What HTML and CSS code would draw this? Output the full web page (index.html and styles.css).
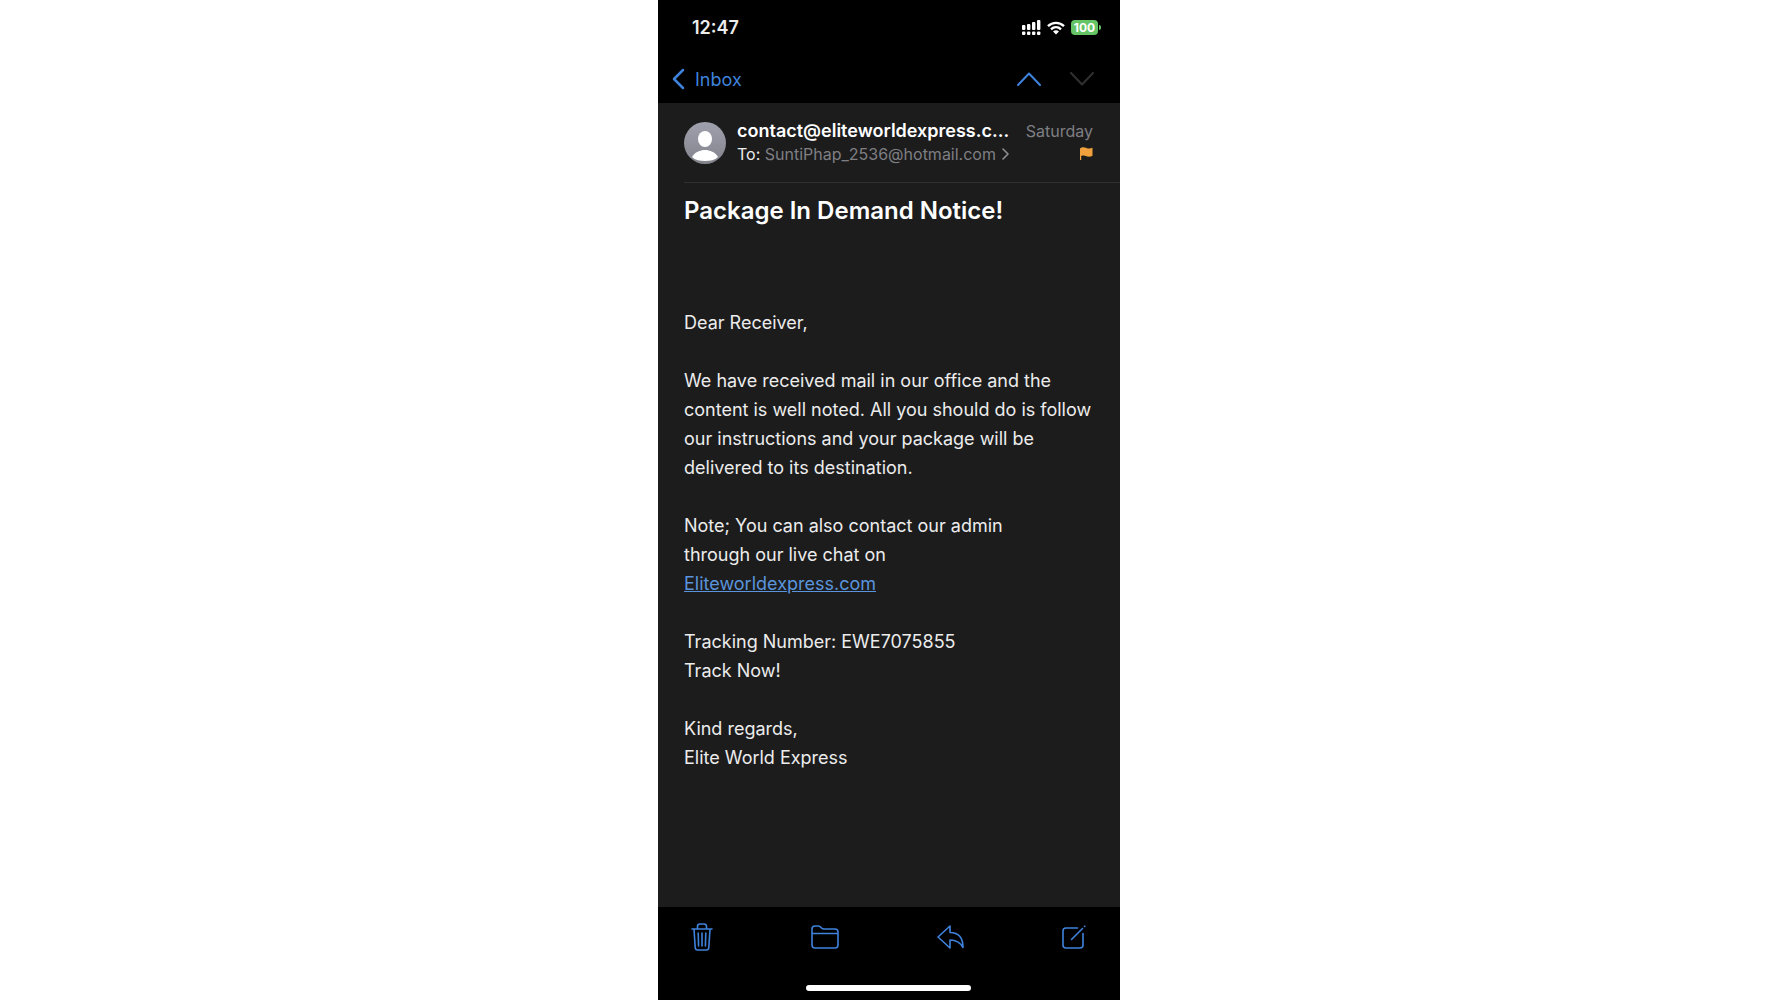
FILE: index.html
```html
<!DOCTYPE html>
<html lang="en">
<head>
  <meta charset="UTF-8" />
  <meta name="viewport" content="width=device-width, initial-scale=1.0" />
  <title>Package In Demand Notice!</title>
  <link rel="stylesheet" href="styles.css">
</head>
<body>

  <div class="phone">
    <!-- Status bar -->
    <div class="status-bar">
      <span class="time">12:47</span>
      <div class="status-icons">
        <svg width="19" height="15" viewBox="0 0 19 15" fill="#fff">
          <rect x="0" y="5" width="3.400" height="5" rx="1"/>
          <rect x="5" y="4" width="3.400" height="6" rx="1"/>
          <rect x="10" y="2" width="3.400" height="8" rx="1"/>
          <rect x="15" y="0" width="3.400" height="10" rx="1"/>
          <rect x="0" y="11.500" width="3.400" height="3.400" rx="1"/>
          <rect x="5" y="11.500" width="3.400" height="3.400" rx="1"/>
          <rect x="10" y="11.500" width="3.400" height="3.400" rx="1"/>
          <rect x="15" y="11.500" width="3.400" height="3.400" rx="1"/>
        </svg>
        <svg width="18" height="14" viewBox="0 0 18 14" fill="none" stroke="#fff" stroke-width="2.4">
          <path d="M1 5.2C5.5.7 12.500.7 17 5.200"/>
          <path d="M4 8.300c2.900-2.800 7.100-2.800 10 0"/>
          <path d="M9 13.500 6 10.500c1.800-1.600 4.200-1.600 6 0z" fill="#fff" stroke="none"/>
        </svg>
        <span class="battery">100</span>
      </div>
    </div>

    <!-- Navigation -->
    <nav class="nav-bar">
      <a href="#" class="back">
        <svg width="13" height="22" viewBox="0 0 13 22" fill="none" stroke="currentColor" stroke-width="2.500" stroke-linecap="round" stroke-linejoin="round"><path d="M11 2 2 11l9 9"/></svg>
        Inbox
      </a>
      <div class="nav-arrows">
        <button type="button" aria-label="Previous message">
          <svg width="24" height="14" viewBox="0 0 24 14" fill="none" stroke="currentColor" stroke-width="2" stroke-linecap="round" stroke-linejoin="round"><path d="M1 13 12 1.500 23 13"/></svg>
        </button>
        <button type="button" aria-label="Next message" disabled>
          <svg width="24" height="14" viewBox="0 0 24 14" fill="none" stroke="currentColor" stroke-width="2" stroke-linecap="round" stroke-linejoin="round"><path d="M1 1 12 12.500 23 1"/></svg>
        </button>
      </div>
    </nav>

    <!-- Message -->
    <main class="message">
      <header class="sender">
        <svg class="avatar" viewBox="0 0 42 42">
          <defs>
            <linearGradient id="avatarFill" x1="0" y1="0" x2="0" y2="1">
              <stop offset="0" stop-color="#a0a1ae"/>
              <stop offset="1" stop-color="#82838b"/>
            </linearGradient>
          </defs>
          <circle cx="21" cy="21" r="21" fill="url(#avatarFill)"/>
          <ellipse cx="21" cy="17" rx="7" ry="8" fill="#fff"/>
          <path d="M8 35c3-5 8-7 13-7s10 2 13 7c-3 3-8 4-13 4s-10-1-13-4z" fill="#fff"/>
        </svg>
        <div class="sender-info">
          <div class="row">
            <span class="from">contact@eliteworldexpress.c...</span>
            <span class="date">Saturday</span>
          </div>
          <div class="row">
            <span class="to"><b>To:</b> SuntiPhap_2536@hotmail.com
              <svg width="7" height="12" viewBox="0 0 7 12" fill="none" stroke="#8e8e93" stroke-width="1.600" stroke-linecap="round" stroke-linejoin="round"><path d="M1 1l5 5-5 5"/></svg>
            </span>
            <svg class="flag" width="13" height="13" viewBox="0 0 13 13" fill="#f0a03c"><path d="M0 1.500C2-.3 4.500.2 6.500 1c2 .8 4 .6 6-.2v8c-2 1-4 1.100-6 .4-2-.7-3.500-.8-5.300-.2V13H0z"/></svg>
          </div>
        </div>
      </header>

      <h1>Package In Demand Notice!</h1>

      <div class="content">
        <p>Dear Receiver,</p>
        <p>We have received mail in our office and the content is well noted. All you should do is follow our instructions and your package will be delivered to its destination.</p>
        <p>Note; You can also contact our admin<br>through our live chat on<br><a href="#">Eliteworldexpress.com</a></p>
        <p>Tracking Number: EWE7075855<br>Track Now!</p>
        <p>Kind regards,<br>Elite World Express</p>
      </div>
    </main>

    <!-- Bottom toolbar -->
    <footer class="toolbar">
      <div class="actions">
        <button type="button" aria-label="Delete">
          <svg width="22" height="28" viewBox="0 0 22 28"><path d="M1 6h20M6.500 6V3.500Q6.500 1 9 1h4q2.500 0 2.500 2.500V6M3 6l1.200 18.500Q4.400 27 6.500 27h9q2.100 0 2.300-2.500L19 6M7.200 10l.4 13M11 10v13M14.800 10l-.4 13"/></svg>
        </button>
        <button type="button" aria-label="Move to folder">
          <svg width="28" height="24" viewBox="0 0 28 24"><path d="M1 20V4q0-3 3-3h3q1.500 0 2.500 1l1 1q1 1 2.500 1h11q3 0 3 3v13q0 3-3 3H4q-3 0-3-3zM1 8.500h26"/></svg>
        </button>
        <button type="button" aria-label="Reply">
          <svg width="27" height="24" viewBox="0 0 27 24"><path d="M1 12 13 1v6.500c9 0 13 6 13 15-3-5.500-7-7.500-13-7.500v8z"/></svg>
        </button>
        <button type="button" aria-label="Compose">
          <svg width="24" height="24" viewBox="0 0 24 24"><path d="M15.500 3H4Q1 3 1 6v14q0 3 3 3h14q3 0 3-3V8.500M9.500 14.500 20.500 3.500M22.500 1.500l.3-.3"/></svg>
        </button>
      </div>
      <div class="home-indicator"></div>
    </footer>
  </div>

</body>
</html>
```

FILE: styles.css
```css
* {
  box-sizing: border-box;
}

body {
  margin: 0;
  font-family: Inter, "Liberation Sans", sans-serif;
  background: #fff;
  color: #ececec;
}

button {
  display: flex;
  padding: 0;
  border: none;
  background: none;
  color: #3f82dc;
  cursor: pointer;
}

.phone {
  display: flex;
  flex-direction: column;
  max-width: 462px;
  min-height: 100vh;
  margin: 0 auto;
  background: #000;
}

/* Status bar */
.status-bar {
  display: flex;
  align-items: center;
  justify-content: space-between;
  height: 55px;
  padding: 0 22px 0 34px;
}

.time {
  font-size: 18px;
  font-weight: 600;
}

.status-icons {
  display: flex;
  align-items: center;
  gap: 6px;
}

.battery {
  position: relative;
  width: 27px;
  border-radius: 4px;
  background: #65c466;
  color: #fff;
  font-size: 12px;
  font-weight: 700;
  line-height: 15px;
  text-align: center;
}

.battery::after {
  content: "";
  position: absolute;
  top: 5px;
  right: -3px;
  width: 2px;
  height: 5px;
  border-radius: 0 2px 2px 0;
  background: #65c466;
}

/* Navigation */
.nav-bar {
  display: flex;
  align-items: center;
  justify-content: space-between;
  height: 48px;
  padding: 0 26px 0 14px;
}

.back {
  display: flex;
  align-items: center;
  gap: 10px;
  color: #3f82dc;
  font-size: 18px;
  text-decoration: none;
}

.nav-arrows {
  display: flex;
  gap: 29px;
}

.nav-arrows button:disabled {
  color: #303033;
  cursor: default;
}

/* Message */
.message {
  flex: 1;
  background: #1c1c1d;
}

.sender {
  display: flex;
  align-items: center;
  gap: 11px;
  height: 80px;
  margin-left: 26px;
  padding-right: 27px;
  border-bottom: 1px solid #2f2f31;
}

.avatar {
  flex: none;
  width: 42px;
  height: 42px;
}

.sender-info {
  flex: 1;
  min-width: 0;
}

.row {
  display: flex;
  align-items: baseline;
  justify-content: space-between;
  line-height: 23px;
}

.from {
  color: #fff;
  font-size: 18px;
  font-weight: 600;
  white-space: nowrap;
}

.date,
.to {
  color: #7f7f83;
  font-size: 16px;
  white-space: nowrap;
}

.to b {
  color: #ececec;
  font-weight: 400;
}

.to svg {
  margin-left: 2px;
}

h1 {
  margin: 12px 26px 81px;
  color: #fff;
  font-size: 24px;
  font-weight: 600;
  line-height: 32px;
}

.content {
  padding: 0 26px;
  font-size: 18px;
  line-height: 29px;
}

.content p {
  margin: 0 0 29px;
}

.content a {
  color: #5a94dc;
}

/* Toolbar */
.toolbar {
  padding: 15px 34px 9px 33px;
}

.actions {
  display: flex;
  align-items: center;
  justify-content: space-between;
  height: 30px;
  margin-bottom: 33px;
}

.actions svg {
  fill: none;
  stroke: currentColor;
  stroke-width: 1.6;
  stroke-linecap: round;
  stroke-linejoin: round;
}

.home-indicator {
  width: 165px;
  height: 6px;
  margin: 0 auto;
  border-radius: 3px;
  background: #fff;
}
```
